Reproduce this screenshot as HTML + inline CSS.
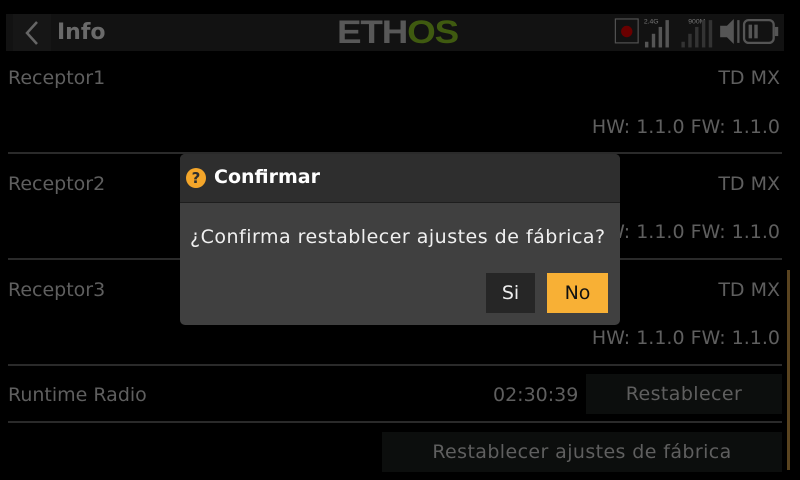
<!DOCTYPE html>
<html><head><meta charset="utf-8"><style>
*{margin:0;padding:0;box-sizing:border-box}
body{width:800px;height:480px;background:#000;position:relative;overflow:hidden;font-family:"DejaVu Sans","Liberation Sans",sans-serif;color:#5f5f5f}
.a{position:absolute;white-space:nowrap}
.t{font-size:19px}
.line{position:absolute;left:8px;width:774px;height:2px;background:#2a2a2a}
</style></head><body>
<div class="a" style="left:6px;top:14px;width:778px;height:37px;background:#121212"></div>
<div class="a" style="left:13px;top:14px;width:38px;height:37px;background:#161616"></div>
<svg class="a" style="left:22px;top:19px" width="22" height="28"><path d="M15 3 L5 14 L15 25" stroke="#666" stroke-width="2.5" fill="none"/></svg>
<div class="a" style="left:57px;top:20px;font-size:22px;font-weight:bold;color:#6a6a6a">Info</div>
<div class="a" style="left:337px;top:14px;font-size:32px;font-weight:bold;letter-spacing:-1px;color:#585858;font-family:'Liberation Sans',sans-serif;transform:scaleX(1.15);transform-origin:left">ETH<span style="color:#3f5a10">OS</span></div>
<svg class="a" style="left:613px;top:11px" width="171" height="41" viewBox="0 0 150 36">
<rect x="2" y="7" width="20" height="21" fill="none" stroke="#555" stroke-width="1"/><circle cx="12" cy="18" r="5" fill="#6a0000"/>
<text x="27" y="11" font-size="6" fill="#777" font-family="Liberation Sans">2.4G</text>
<rect x="28" y="27" width="3" height="5" fill="#555"/><rect x="34" y="20" width="3" height="12" fill="#555"/><rect x="40" y="14" width="3" height="18" fill="#555"/><rect x="46" y="8" width="3" height="24" fill="#555"/>
<text x="66" y="11" font-size="6" fill="#777" font-family="Liberation Sans">900M</text>
<rect x="60" y="27" width="3" height="5" fill="#333"/><rect x="66" y="20" width="3" height="12" fill="#333"/><rect x="72" y="14" width="3" height="18" fill="#333"/><rect x="78" y="8" width="3" height="24" fill="#333"/><rect x="84" y="8" width="3" height="24" fill="#333"/>
<path d="M94 13 L100 13 L106 7 L106 29 L100 23 L94 23Z" fill="#555"/><rect x="109" y="8" width="2" height="20" fill="#555"/>
<rect x="115" y="8" width="26" height="20" rx="4" fill="none" stroke="#555" stroke-width="2"/><rect x="142" y="14" width="3" height="8" fill="#555"/><rect x="119" y="12" width="3" height="12" fill="#555"/><rect x="124" y="12" width="3" height="12" fill="#555"/>
</svg>

<div class="a t" style="left:8px;top:67px">Receptor1</div>
<div class="a t" style="right:20px;top:67px">TD MX</div>
<div class="a t" style="right:20px;top:116px">HW: 1.1.0 FW: 1.1.0</div>
<div class="line" style="top:152px"></div>
<div class="a t" style="left:8px;top:173px">Receptor2</div>
<div class="a t" style="right:20px;top:173px">TD MX</div>
<div class="a t" style="right:20px;top:221px">HW: 1.1.0 FW: 1.1.0</div>
<div class="line" style="top:258px"></div>
<div class="a t" style="left:8px;top:279px">Receptor3</div>
<div class="a t" style="right:20px;top:279px">TD MX</div>
<div class="a t" style="right:20px;top:327px">HW: 1.1.0 FW: 1.1.0</div>
<div class="line" style="top:364px"></div>
<div class="a t" style="left:8px;top:384px">Runtime Radio</div>
<div class="a t" style="left:493px;top:384px">02:30:39</div>
<div class="a t" style="left:586px;top:374px;width:196px;height:40px;background:#0c0e0d;text-align:center;line-height:40px;letter-spacing:0.4px">Restablecer</div>
<div class="line" style="top:421px"></div>
<div class="a t" style="left:382px;top:432px;width:400px;height:40px;background:#0c0e0d;text-align:center;line-height:40px;letter-spacing:0.4px">Restablecer ajustes de fábrica</div>
<div class="a" style="left:787px;top:270px;width:3px;height:200px;background:#5a4420"></div>

<div class="a" style="left:180px;top:154px;width:440px;height:171px;background:#404040;border-radius:5px;overflow:hidden">
<div style="height:49px;background:#2e2e2e;border-bottom:1px solid #1e1e1e;position:relative">
<div class="a" style="left:6px;top:14px;width:20px;height:20px;border-radius:50%;background:#f4a62a;color:#2e2e2e;font-weight:bold;font-size:15px;text-align:center;line-height:20px">?</div>
<div class="a" style="left:34px;top:12px;font-size:19px;font-weight:bold;color:#fff">Confirmar</div>
</div>
<div class="a" style="left:10px;top:72px;font-size:19px;color:#f0f0f0;letter-spacing:0.5px">¿Confirma restablecer ajustes de fábrica?</div>
<div class="a" style="left:306px;top:119px;width:49px;height:40px;background:#262626;color:#eee;font-size:19px;text-align:center;line-height:40px">Si</div>
<div class="a" style="left:367px;top:119px;width:61px;height:40px;background:#f8b035;color:#111;font-size:19px;text-align:center;line-height:40px">No</div>
</div>
</body></html>
